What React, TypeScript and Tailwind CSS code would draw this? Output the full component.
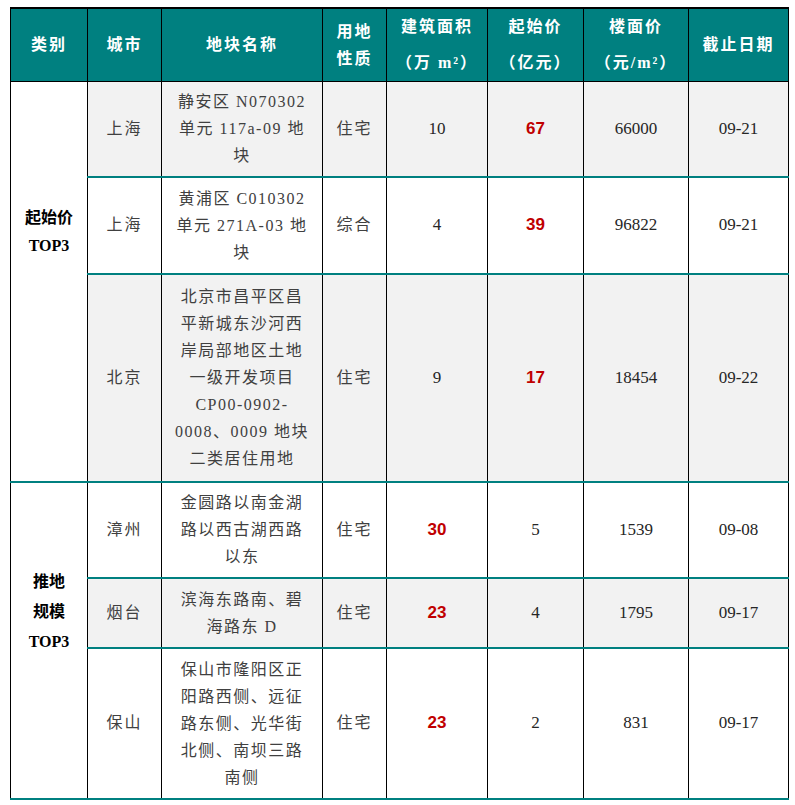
import React from "react";

type Row = {
  city: string;
  name: string[];
  use: string;
  area: string;
  price: string;
  unit: string;
  date: string;
  red: "area" | "price";
  h: string;
  gray: boolean;
};

const GROUPS: { label: string[]; pad: string; rows: Row[] }[] = [
  {
    label: ["起始价", "TOP3"],
    pad: "pt-[122px] leading-[28px]",
    rows: [
      { city: "上海", name: ["静安区 N070302", "单元 117a-09 地", "块"], use: "住宅", area: "10", price: "67", unit: "66000", date: "09-21", red: "price", h: "h-[95px]", gray: true },
      { city: "上海", name: ["黄浦区 C010302", "单元 271A-03 地", "块"], use: "综合", area: "4", price: "39", unit: "96822", date: "09-21", red: "price", h: "h-[97px]", gray: false },
      {
        city: "北京",
        name: ["北京市昌平区昌", "平新城东沙河西", "岸局部地区土地", "一级开发项目", "CP00-0902-", "0008、0009 地块", "二类居住用地"],
        use: "住宅", area: "9", price: "17", unit: "18454", date: "09-22", red: "price", h: "h-[208px]", gray: true,
      },
    ],
  },
  {
    label: ["推地", "规模", "TOP3"],
    pad: "pt-[84px] leading-[30px]",
    rows: [
      { city: "漳州", name: ["金圆路以南金湖", "路以西古湖西路", "以东"], use: "住宅", area: "30", price: "5", unit: "1539", date: "09-08", red: "area", h: "h-[96px]", gray: false },
      { city: "烟台", name: ["滨海东路南、碧", "海路东 D"], use: "住宅", area: "23", price: "4", unit: "1795", date: "09-17", red: "area", h: "h-[70px]", gray: true },
      { city: "保山", name: ["保山市隆阳区正", "阳路西侧、远征", "路东侧、光华街", "北侧、南坝三路", "南侧"], use: "住宅", area: "23", price: "2", unit: "831", date: "09-17", red: "area", h: "h-[151px]", gray: false },
    ],
  },
];

const serif = "font-['Liberation_Serif','Noto_Sans_CJK_SC',serif]";
const th = "border border-black border-t-2 text-white font-bold text-[16px] tracking-[2px] text-center align-middle";
const td = "border-x border-x-black border-b-2 border-b-[#008080] text-center align-middle";

const Num = ({ v, red }: { v: string; red: boolean }) =>
  red ? (
    <span className="font-['Liberation_Sans',Arial,sans-serif] font-bold text-[17px] text-[#c00000]">{v}</span>
  ) : (
    <span className="text-[17px] text-[#262626]">{v}</span>
  );

export default function App() {
  return (
    <div className={`bg-white w-[795px] h-[805px] pt-[7px] pl-[10px] ${serif}`}>
      <table className="table-fixed border-collapse w-[779px]">
        <colgroup>
          <col className="w-[77px]" />
          <col className="w-[74px]" />
          <col className="w-[161px]" />
          <col className="w-[64px]" />
          <col className="w-[101px]" />
          <col className="w-[96px]" />
          <col className="w-[105px]" />
          <col className="w-[100px]" />
        </colgroup>
        <thead>
          <tr className="h-[73px] bg-[#008080]">
            <th className={th}>类别</th>
            <th className={th}>城市</th>
            <th className={th}>地块名称</th>
            <th className={`${th} leading-[27px]`}>用地<br />性质</th>
            <th className={`${th} leading-[36px]`}>建筑面积<br />（万 m²）</th>
            <th className={`${th} leading-[36px]`}>起始价<br />（亿元）</th>
            <th className={`${th} leading-[36px]`}>楼面价<br />（元/m²）</th>
            <th className={th}>截止日期</th>
          </tr>
        </thead>
        <tbody>
          {GROUPS.map((g) =>
            g.rows.map((r, i) => (
              <tr key={g.label[0] + i} className={r.h}>
                {i === 0 && (
                  <td
                    rowSpan={g.rows.length}
                    className={`border-x border-x-black border-b-2 border-b-[#008080] bg-white text-center align-top font-bold text-[16px] text-black ${g.pad}`}
                  >
                    {g.label.map((l) => (
                      <div key={l}>{l}</div>
                    ))}
                  </td>
                )}
                <td className={`${td} ${r.gray ? "bg-[#f2f2f2]" : "bg-white"} text-[16px] tracking-[2px] text-[#404040]`}>{r.city}</td>
                <td className={`${td} ${r.gray ? "bg-[#f2f2f2]" : "bg-white"} text-[16px] tracking-[1.5px] leading-[27px] text-[#404040]`}>
                  {r.name.map((n) => (
                    <div key={n}>{n}</div>
                  ))}
                </td>
                <td className={`${td} ${r.gray ? "bg-[#f2f2f2]" : "bg-white"} text-[16px] tracking-[2px] text-[#404040]`}>{r.use}</td>
                <td className={`${td} ${r.gray ? "bg-[#f2f2f2]" : "bg-white"}`}><Num v={r.area} red={r.red === "area"} /></td>
                <td className={`${td} ${r.gray ? "bg-[#f2f2f2]" : "bg-white"}`}><Num v={r.price} red={r.red === "price"} /></td>
                <td className={`${td} ${r.gray ? "bg-[#f2f2f2]" : "bg-white"}`}><Num v={r.unit} red={false} /></td>
                <td className={`${td} ${r.gray ? "bg-[#f2f2f2]" : "bg-white"}`}><Num v={r.date} red={false} /></td>
              </tr>
            ))
          )}
        </tbody>
      </table>
    </div>
  );
}
